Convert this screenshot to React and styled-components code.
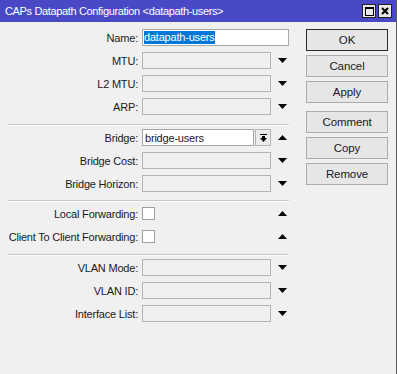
import styled, { createGlobalStyle } from 'styled-components'

const GlobalStyle = createGlobalStyle`
  html, body {
    margin: 0;
    padding: 0;
    background: #f0f0f0;
  }
  body {
    font-family: "Liberation Sans", Arial, sans-serif;
    font-size: 11px;
    color: #1a1a1a;
  }
`

const Window = styled.div`
  width: 397px;
  height: 374px;
  box-sizing: border-box;
  background: #f0f0f0;
  border-right: 1px solid #5c5c5c;
  display: flex;
  flex-direction: column;
  overflow: hidden;
`

const TitleBar = styled.div`
  height: 22px;
  background: #4949c6;
  color: #fff;
  display: flex;
  align-items: center;
  padding: 0 4px 0 5px;
  font-size: 11px;
  letter-spacing: -0.35px;
`

const Title = styled.div`
  flex: 1;
  white-space: nowrap;
`

const TitleButtons = styled.div`
  display: flex;
  gap: 2px;
`

const TitleButton = styled.div`
  width: 14px;
  height: 14px;
  box-sizing: border-box;
  background: #e8e8e8;
  border: 1px solid #222;
  display: flex;
  align-items: center;
  justify-content: center;
`

const Body = styled.div`
  display: flex;
  padding-top: 4px;
`

const Form = styled.div`
  width: 293px;
  display: flex;
  flex-direction: column;
`

const Row = styled.div`
  height: 23px;
  display: flex;
  align-items: center;
`

const Label = styled.div`
  width: 130px;
  margin-left: 8px;
  margin-right: 4px;
  text-align: right;
  white-space: nowrap;
  letter-spacing: -0.2px;
`

const Input = styled.div`
  width: ${(p) => p.$width}px;
  height: 17px;
  box-sizing: border-box;
  border: 1px solid ${(p) => (p.$active ? '#a8a8a8' : '#b4b4b4')};
  background: ${(p) => (p.$active ? '#fff' : '#f0f0f0')};
  display: flex;
  align-items: center;
  padding-left: 1px;
  white-space: nowrap;
  letter-spacing: -0.2px;
`

const Selected = styled.span`
  background: #0078d7;
  color: #fff;
  line-height: 13px;
`

const Value = styled.span`
  padding-left: 1px;
`

const DropButton = styled.div`
  width: 16px;
  height: 17px;
  box-sizing: border-box;
  margin-left: 1px;
  border: 1px solid #b4b4b4;
  background: #ececec;
  display: flex;
  align-items: center;
  justify-content: center;
`

const Arrow = styled.div`
  width: 22px;
  display: flex;
  justify-content: center;
`

const Checkbox = styled.div`
  width: 13px;
  height: 13px;
  box-sizing: border-box;
  border: 1px solid #a0a0a0;
  background: #fff;
`

const Spacer = styled.div`
  width: ${(p) => p.$width}px;
`

const Separator = styled.div`
  margin: ${(p) => p.$top}px 4px 0 8px;
  height: 1px;
  background: #c8c8c8;
  border-bottom: 1px solid #fcfcfc;
`

const ButtonCol = styled.div`
  margin-left: 13px;
  padding-top: 3px;
  display: flex;
  flex-direction: column;
  gap: 4px;
`

const Button = styled.div`
  width: 82px;
  height: 22px;
  box-sizing: border-box;
  border: 1px solid ${(p) => (p.$default ? '#2b2b2b' : '#adadad')};
  background: #e6e6e6;
  display: flex;
  align-items: center;
  justify-content: center;
  font-size: 11.5px;
  letter-spacing: -0.1px;
  margin-top: ${(p) => p.$gapTop || 0}px;
`

const Down = () => (
  <svg width="9" height="5" viewBox="0 0 9 5">
    <path d="M0 0h9L4.5 5z" fill="#000" />
  </svg>
)

const Up = () => (
  <svg width="9" height="5" viewBox="0 0 9 5">
    <path d="M0 5h9L4.5 0z" fill="#000" />
  </svg>
)

const DropIcon = () => (
  <svg width="7" height="8" viewBox="0 0 7 8">
    <rect x="0" y="0" width="7" height="1" fill="#000" />
    <rect x="2" y="2" width="3" height="2" fill="#000" />
    <path d="M0 4h7L3.5 8z" fill="#000" />
  </svg>
)

const ComboRow = ({ label }) => (
  <Row>
    <Label>{label}:</Label>
    <Input $width={129} />
    <Arrow>
      <Down />
    </Arrow>
  </Row>
)

const CheckRow = ({ label }) => (
  <Row>
    <Label>{label}:</Label>
    <Checkbox />
    <Spacer $width={116} />
    <Arrow>
      <Up />
    </Arrow>
  </Row>
)

export default function App() {
  return (
    <>
      <GlobalStyle />
      <Window>
        <TitleBar>
          <Title>CAPs Datapath Configuration &lt;datapath-users&gt;</Title>
          <TitleButtons>
            <TitleButton>
              <svg width="9" height="9" viewBox="0 0 9 9">
                <rect x="0.5" y="0.5" width="8" height="8" fill="none" stroke="#000" />
                <rect x="0" y="0" width="9" height="2" fill="#000" />
              </svg>
            </TitleButton>
            <TitleButton>
              <svg width="8" height="8" viewBox="0 0 8 8">
                <path d="M1 1L7 7M7 1L1 7" stroke="#000" strokeWidth="2" />
              </svg>
            </TitleButton>
          </TitleButtons>
        </TitleBar>
        <Body>
          <Form>
            <Row>
              <Label>Name:</Label>
              <Input $width={147} $active>
                <Selected>datapath-users</Selected>
              </Input>
            </Row>
            <ComboRow label="MTU" />
            <ComboRow label="L2 MTU" />
            <ComboRow label="ARP" />
            <Separator $top={6} />
            <Row>
              <Label>Bridge:</Label>
              <Input $width={112} $active>
                <Value>bridge-users</Value>
              </Input>
              <DropButton>
                <DropIcon />
              </DropButton>
              <Arrow>
                <Up />
              </Arrow>
            </Row>
            <ComboRow label="Bridge Cost" />
            <ComboRow label="Bridge Horizon" />
            <Separator $top={5} />
            <CheckRow label="Local Forwarding" />
            <CheckRow label="Client To Client Forwarding" />
            <Separator $top={6} />
            <ComboRow label="VLAN Mode" />
            <ComboRow label="VLAN ID" />
            <ComboRow label="Interface List" />
          </Form>
          <ButtonCol>
            <Button $default>OK</Button>
            <Button>Cancel</Button>
            <Button>Apply</Button>
            <Button $gapTop={4}>Comment</Button>
            <Button>Copy</Button>
            <Button>Remove</Button>
          </ButtonCol>
        </Body>
      </Window>
    </>
  )
}
